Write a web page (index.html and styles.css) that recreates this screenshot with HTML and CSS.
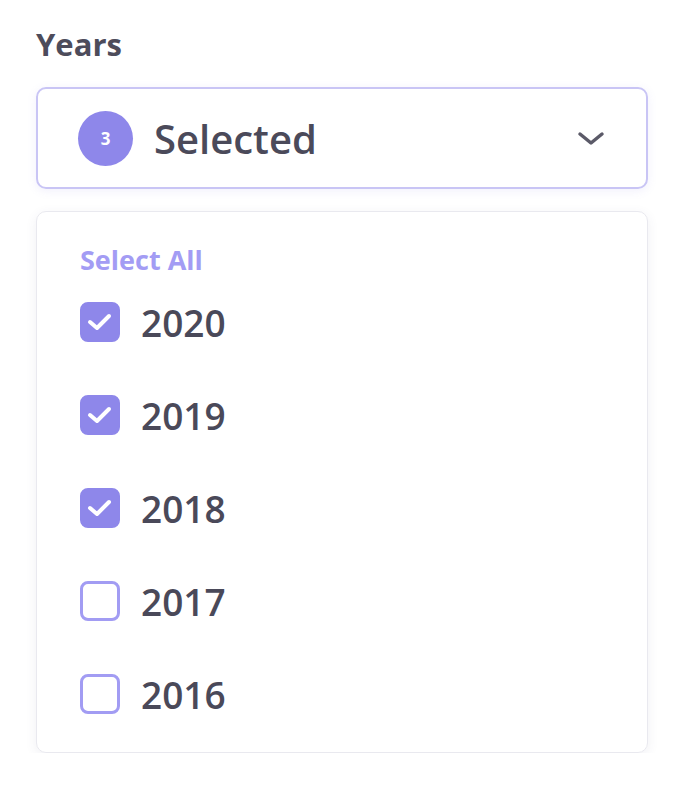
FILE: index.html
```html
<!DOCTYPE html>
<html lang="en">
  <head>
    <meta charset="UTF-8" />
    <meta name="viewport" content="width=device-width, initial-scale=1.0" />
    <title>Years filter</title>
    <link rel="stylesheet" href="styles.css">
  </head>
  <body>
    <!-- Campo de seleção de anos -->
    <div class="field">
      <div class="field-label">Years</div>

      <div class="select-box">
        <span class="badge">3</span>
        <span class="select-text">Selected</span>
        <svg class="chevron" width="30" height="20" viewBox="0 0 30 20">
          <path d="M4 6 L15 15 L26 6" fill="none" stroke="#5b5a68" stroke-width="3.5" stroke-linecap="round" stroke-linejoin="round" />
        </svg>
      </div>

      <!-- Lista suspensa com as opções -->
      <div class="dropdown">
        <div class="select-all">Select All</div>

        <div class="options">
          <div class="option">
            <span class="checkbox checked">
              <svg width="26" height="22" viewBox="0 0 26 22"><path d="M3 11 L10 17 L22 5" fill="none" stroke="#fff" stroke-width="4" stroke-linecap="round" stroke-linejoin="round" /></svg>
            </span>
            <span class="option-text">2020</span>
          </div>
          <div class="option">
            <span class="checkbox checked">
              <svg width="26" height="22" viewBox="0 0 26 22"><path d="M3 11 L10 17 L22 5" fill="none" stroke="#fff" stroke-width="4" stroke-linecap="round" stroke-linejoin="round" /></svg>
            </span>
            <span class="option-text">2019</span>
          </div>
          <div class="option">
            <span class="checkbox checked">
              <svg width="26" height="22" viewBox="0 0 26 22"><path d="M3 11 L10 17 L22 5" fill="none" stroke="#fff" stroke-width="4" stroke-linecap="round" stroke-linejoin="round" /></svg>
            </span>
            <span class="option-text">2018</span>
          </div>
          <div class="option">
            <span class="checkbox"></span>
            <span class="option-text">2017</span>
          </div>
          <div class="option">
            <span class="checkbox"></span>
            <span class="option-text">2016</span>
          </div>
        </div>
      </div>
    </div>
  </body>
</html>
```

FILE: styles.css
```css
/* Reset básico */
* {
  box-sizing: border-box;
}

body {
  margin: 0;
  padding: 23px 36px 0 36px;
  background-color: #ffffff;
  font-family: 'Open Sans', 'Lato', sans-serif;
  color: #4a4959;
}

.field {
  width: 612px;
}

.field-label {
  font-size: 31px;
  font-weight: 700;
  line-height: 42px;
  color: #4d4c5b;
  margin-bottom: 22px;
}

/* Caixa de seleção */
.select-box {
  display: flex;
  align-items: center;
  height: 102px;
  border: 2px solid #c9c5f5;
  border-radius: 10px;
  padding: 0 40px 0 40px;
  box-shadow: 0 2px 10px rgba(140, 130, 230, 0.12);
}

.badge {
  display: flex;
  align-items: center;
  justify-content: center;
  width: 55px;
  height: 55px;
  border-radius: 50%;
  background-color: #8e87ea;
  color: #ffffff;
  font-size: 17px;
  font-weight: 700;
}

.select-text {
  flex: 1;
  margin-left: 21px;
  font-size: 40px;
  font-weight: 600;
  color: #4b4a5a;
}

.chevron {
  display: block;
}

/* Lista suspensa */
.dropdown {
  margin-top: 22px;
  border: 1px solid #e9e9ef;
  border-radius: 10px;
  padding: 31px 42px 38px 43px;
  box-shadow: 0 3px 12px rgba(60, 60, 110, 0.08);
}

.select-all {
  font-size: 27px;
  font-weight: 700;
  line-height: 34px;
  color: #a39cf4;
  margin-bottom: 25px;
}

.options {
  display: flex;
  flex-direction: column;
  gap: 53px;
}

.option {
  display: flex;
  align-items: center;
  height: 40px;
}

.checkbox {
  display: flex;
  align-items: center;
  justify-content: center;
  width: 40px;
  height: 40px;
  border: 3px solid #a29cf3;
  border-radius: 8px;
}

.checkbox.checked {
  background-color: #8e87ea;
  border-color: #8e87ea;
}

.option-text {
  margin-left: 21px;
  font-size: 37px;
  font-weight: 600;
  color: #4a4959;
}
```
